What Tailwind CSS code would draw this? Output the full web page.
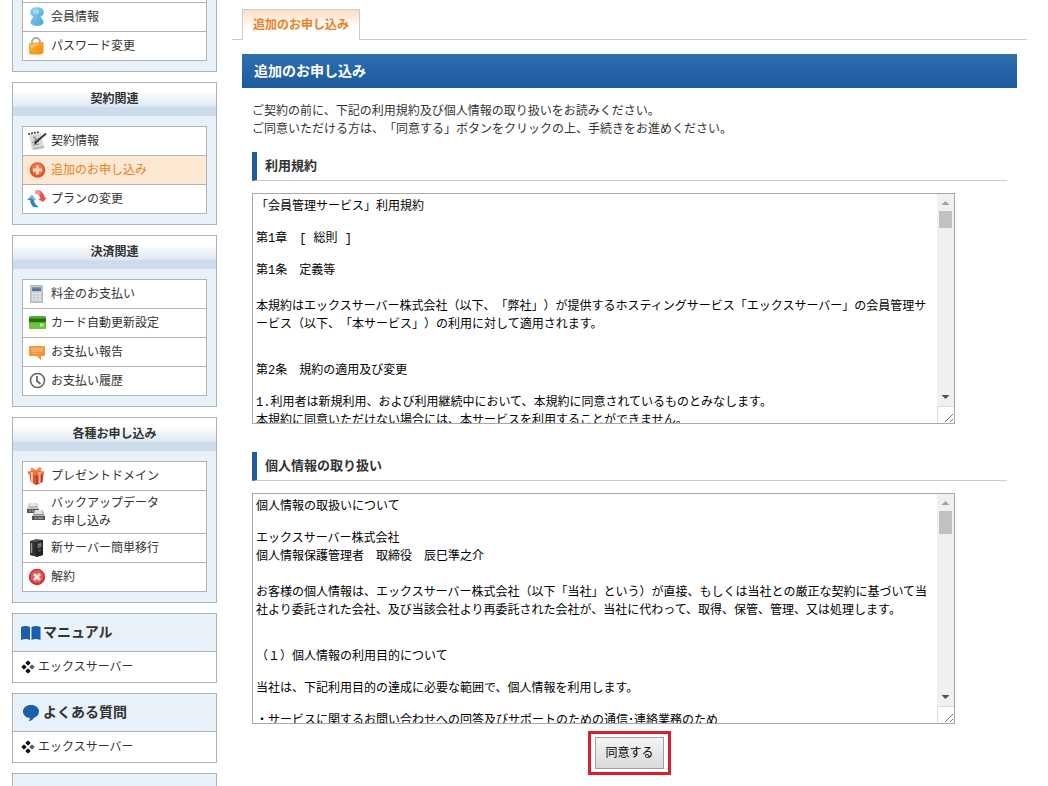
<!DOCTYPE html>
<html lang="ja">
<head>
<meta charset="utf-8">
<meta name="viewport" content="width=device-width, initial-scale=1">
<title>追加のお申し込み</title>
<script src="https://cdn.jsdelivr.net/npm/@tailwindcss/browser@4"></script>
</head>
<body class="h-screen overflow-hidden bg-white font-['Noto_Sans_CJK_JP',sans-serif] text-xs leading-[18px] text-[#333] [text-spacing-trim:space-all]">
<div class="flex items-start gap-[15px] pr-[21px] pl-3">

  <!-- Sidebar -->
  <nav class="flex w-[205px] shrink-0 flex-col gap-2.5" aria-label="メニュー">

    <section class="border border-t-0 border-[#b0b3b6] bg-[#e8f1f8] px-[9px] pb-2.5">
      <ul class="border-x border-b border-[#b0b3b6] bg-white pt-0.5">
        <li class="border-t border-[#b0b3b6]"><a href="#" class="flex min-h-7 items-center gap-1 pl-1">
          <svg class="size-5 shrink-0" viewBox="0 0 20 20" aria-hidden="true"><defs><linearGradient id="person" x2="1" y2="1"><stop stop-color="#8fd0f2"/><stop offset="1" stop-color="#4aa5d6"/></linearGradient></defs><path d="M10 .5a5 5 0 0 0-3.500 9.500q-1.500 1-2 2.500Q3 15 4 17q2 2 6 2t6-2q1-2-.5-4.500-.5-1.500-2-2.500A5 5 0 0 0 10 .5z" fill="url(#person)"/><ellipse cx="9" cy="4.500" rx="3" ry="2.500" fill="#c2e6f9" opacity=".6"/></svg>
          <span class="pb-0.5">会員情報</span></a></li>
        <li class="border-t border-[#b0b3b6]"><a href="#" class="flex min-h-7 items-center gap-1 pl-1">
          <svg class="size-5 shrink-0" viewBox="0 0 20 20" aria-hidden="true"><defs><linearGradient id="lock" x2="1" y2="1"><stop stop-color="#ffb63a"/><stop offset="1" stop-color="#f58a06"/></linearGradient></defs><path d="M5 9V6a4 4 0 0 1 8 0v3" fill="none" stroke="#a9a9a9" stroke-width="2"/><path d="m2 7 14.500-1v11l-3 1.500H3.500L2 17z" fill="url(#lock)"/><path d="M3 8h9L4 13z" fill="#ffd070" opacity=".6"/><path d="M5 9V6.500M13 8.500v-2" fill="none" stroke="#b9b2a4" stroke-width="2"/></svg>
          <span class="pb-0.5">パスワード変更</span></a></li>
      </ul>
    </section>

    <section class="border border-[#b0b3b6] bg-[#e8f1f8]">
      <h2 class="bg-linear-to-b from-white from-25% via-[#dfe9f4] via-70% to-[#cddceb] to-75% pt-1.5 pb-[9px] text-center font-bold">契約関連</h2>
      <ul class="mx-[9px] my-2.5 border-x border-b border-[#b0b3b6] bg-white">
        <li class="border-t border-[#b0b3b6]"><a href="#" class="flex min-h-7 items-center gap-1 pl-1">
          <svg class="size-5 shrink-0" viewBox="0 0 20 20" aria-hidden="true"><path d="M2 3 14 2l3 15-12 2z" fill="#d8d8d6"/><path d="m6 17 11-2 .5 2L7 19z" fill="#b9b9b8"/><path d="m1 3 11-2" stroke="#444" stroke-width="1.500" stroke-dasharray="2 1"/><path d="m6 6 6 5M5 12l7-5m-6 7 6-1M8 5l1 9" stroke="#888"/><path d="m8 12 11-9.500" stroke="#333" stroke-width="1.700"/><path d="m7 13 3-1-1.500-1.500z" fill="#111"/></svg>
          <span class="pb-0.5">契約情報</span></a></li>
        <li class="border-t border-[#b0b3b6]"><a href="#" aria-current="page" class="flex min-h-7 items-center gap-1 bg-[#fde9d3] pl-1 text-[#ec7f22]">
          <svg class="size-5 shrink-0" viewBox="0 0 20 20" aria-hidden="true"><circle cx="10.500" cy="10" r="7.800" fill="#df5526"/><circle cx="10.500" cy="9" r="6" fill="#ec7447"/><path d="M10.500 5.500v9M6 10h9" stroke="#fbd5c2" stroke-width="2.800"/></svg>
          <span class="pb-0.5">追加のお申し込み</span></a></li>
        <li class="border-t border-[#b0b3b6]"><a href="#" class="flex min-h-7 items-center gap-1 pl-1">
          <svg class="size-5 shrink-0" viewBox="0 0 20 20" aria-hidden="true"><path d="M8 2q7-3 10 7l2-.5-4 4.500-5-3 2.500-.5Q12 4.500 8 4.500z" fill="#ea5055"/><path d="M8 2q5-1 6 3l-2 1Q11 4 8 4.500z" fill="#f79694"/><path d="M12 18Q4 20 3 11H0l5-5 4 5H7q0 4 5 7z" fill="#2e85bd"/><path d="M0 11l5-5 4 5H6.500l-2-2z" fill="#7db9dd"/></svg>
          <span class="pb-0.5">プランの変更</span></a></li>
      </ul>
    </section>

    <section class="border border-[#b0b3b6] bg-[#e8f1f8]">
      <h2 class="bg-linear-to-b from-white from-25% via-[#dfe9f4] via-70% to-[#cddceb] to-75% pt-1.5 pb-[9px] text-center font-bold">決済関連</h2>
      <ul class="mx-[9px] my-2.5 border-x border-b border-[#b0b3b6] bg-white">
        <li class="border-t border-[#b0b3b6]"><a href="#" class="flex min-h-7 items-center gap-1 pl-1">
          <svg class="size-5 shrink-0" viewBox="0 0 20 20" aria-hidden="true"><path d="M3.500 1.500h12v17h-12z" fill="#c3c9ce" stroke="#b4b9be"/><path d="M5 3h9v4H5z" fill="#507896"/><path d="M5 3h9v1.500H5z" fill="#7c9bb2"/><path d="M5 9.500h9M5 12.500h9M5 15.500h9" stroke="#e4e8eb" stroke-width="2" stroke-dasharray="2.300 1"/></svg>
          <span class="pb-0.5">料金のお支払い</span></a></li>
        <li class="border-t border-[#b0b3b6]"><a href="#" class="flex min-h-7 items-center gap-1 pl-1">
          <svg class="size-5 shrink-0" viewBox="0 0 20 20" aria-hidden="true"><rect x="2" y="3" width="17" height="13" rx="1.500" fill="#54b02c"/><path d="M2 10h17v4.500q0 1.500-1.500 1.500h-14Q2 16 2 14.500z" fill="#6dc33b"/><path d="M2 5.500h17V9H2z" fill="#276b13"/><path d="M13 10.500h3.500v3H13z" fill="#b9eb92"/></svg>
          <span class="pb-0.5">カード自動更新設定</span></a></li>
        <li class="border-t border-[#b0b3b6]"><a href="#" class="flex min-h-7 items-center gap-1 pl-1">
          <svg class="size-5 shrink-0" viewBox="0 0 20 20" aria-hidden="true"><path d="M3.500 4h13Q18 4 18 5.500v7q0 1.500-1.500 1.500H14v4l-4.500-4h-6Q2 14 2 12.500v-7Q2 4 3.500 4z" fill="#f3943a"/><path d="M4 5h12v4H4z" fill="#f7a555"/><path d="M5 7.500h10M5 9.500h10M5 11.500h6" stroke="#f9be84" stroke-width=".8"/></svg>
          <span class="pb-0.5">お支払い報告</span></a></li>
        <li class="border-t border-[#b0b3b6]"><a href="#" class="flex min-h-7 items-center gap-1 pl-1">
          <svg class="size-5 shrink-0" viewBox="0 0 20 20" fill="none" stroke="#666" aria-hidden="true"><circle cx="10.500" cy="9.500" r="7" stroke-width="1.600"/><path d="M10 5v5l3.500 3" stroke-width="1.800"/></svg>
          <span class="pb-0.5">お支払い履歴</span></a></li>
      </ul>
    </section>

    <section class="border border-[#b0b3b6] bg-[#e8f1f8]">
      <h2 class="bg-linear-to-b from-white from-25% via-[#dfe9f4] via-70% to-[#cddceb] to-75% pt-1.5 pb-[9px] text-center font-bold">各種お申し込み</h2>
      <ul class="mx-[9px] my-2.5 border-x border-b border-[#b0b3b6] bg-white">
        <li class="border-t border-[#b0b3b6]"><a href="#" class="flex min-h-7 items-center gap-1 pl-1">
          <svg class="size-5 shrink-0" viewBox="0 0 20 20" aria-hidden="true"><path d="m2.500 7 7 1 7-1-1 9-6.500 3-5.500-3z" fill="#e2512f"/><path d="m9 8 7.500-1-1 9L9 19z" fill="#c93a22"/><path d="M1 5.500 9 4l8 1.500V8L9 9.500 1 8z" fill="#f1703f"/><path d="M5 6v11M12.500 6v11" stroke="#fbc7a0" stroke-width="2"/><path d="M9 5Q5 1 4 3t5 2q4-5 5-2.500T9 5z" fill="#f79a4a" stroke="#ee7a3c"/></svg>
          <span class="pb-0.5">プレゼントドメイン</span></a></li>
        <li class="border-t border-[#b0b3b6]"><a href="#" class="flex min-h-[42px] items-center gap-1 pl-1">
          <svg class="size-5 shrink-0" viewBox="0 0 20 20" aria-hidden="true"><path d="M2 1h8l2 6v4H0V7z" fill="#c9c9c9"/><path d="M0 7h12v4H0z" fill="#555"/><path d="M3 1h6v5H3z" fill="#e6e6e6"/><path d="M2 5h8" stroke="#999"/><path d="M8 8h8l2 6v4H5v-4z" fill="#bdbdbd"/><path d="M5 14h13v4H5z" fill="#555"/><path d="M8 8h7v5H8z" fill="#e2e2e2"/><path d="M7 12.500h9" stroke="#888"/><path d="M2 9h2m1 0h2M8 16h2m1 0h5" stroke="#bbb"/></svg>
          <span class="pb-0.5">バックアップデータ<br>お申し込み</span></a></li>
        <li class="border-t border-[#b0b3b6]"><a href="#" class="flex min-h-7 items-center gap-1 pl-1">
          <svg class="size-5 shrink-0" viewBox="0 0 20 20" aria-hidden="true"><path d="m3 3 6-2 7 1v15l-6 2-7-2z" fill="#555"/><path d="m3 3 6 1v14l-6-1z" fill="#303030"/><path d="m9 4 7-2v15l-7 2z" fill="#222"/><path d="m10.500 5 4-1v6l-4 1z" fill="#555"/><path d="m10.500 7 4-1m-4 2.500 4-1M11 13l3-.5" stroke="#aaa" stroke-width=".6"/><path d="M4.500 5v10" stroke="#999" stroke-width="1.500"/></svg>
          <span class="pb-0.5">新サーバー簡単移行</span></a></li>
        <li class="border-t border-[#b0b3b6]"><a href="#" class="flex min-h-7 items-center gap-1 pl-1">
          <svg class="size-5 shrink-0" viewBox="0 0 20 20" aria-hidden="true"><circle cx="10" cy="10" r="8.200" fill="#cf3038"/><circle cx="10" cy="9.500" r="6.500" fill="#df575b"/><path d="m7 7 6 6m0-6-6 6" stroke="#fbe3e2" stroke-width="2.800"/></svg>
          <span class="pb-0.5">解約</span></a></li>
      </ul>
    </section>

    <section class="border border-[#b0b3b6]">
      <h2 class="flex h-[37px] items-center gap-0.5 bg-[#e8f1f8] pl-2 text-sm font-bold">
        <svg class="h-4 w-5 shrink-0" viewBox="0 0 20 16" fill="#1b5faa" aria-hidden="true"><path d="M0 2q5-2 9 0v13q-4-2-9 0zM10.500 2q4-2 9 0v13q-5-2-9 0z"/></svg>
        <span class="pb-[3px]">マニュアル</span></h2>
      <a href="#" class="flex h-[31px] items-center gap-[3px] border-t border-[#b0b3b6] pl-2">
        <svg class="size-3.5 shrink-0" viewBox="0 0 14 14" aria-hidden="true"><g fill="#111"><rect x="5" y="1" width="4" height="4" rx="1" transform="rotate(45 7 3)"/><rect x="1" y="5" width="4" height="4" rx="1" transform="rotate(45 3 7)"/><rect x="5" y="9" width="4" height="4" rx="1" transform="rotate(45 7 11)"/></g><rect x="9" y="5" width="4" height="4" rx="1" transform="rotate(45 11 7)" fill="#3b628e"/></svg>
        <span class="pb-0.5">エックスサーバー</span></a>
    </section>

    <section class="border border-[#b0b3b6]">
      <h2 class="flex h-[37px] items-center gap-0.5 bg-[#e8f1f8] pl-2 text-sm font-bold">
        <svg class="h-4 w-5 shrink-0" viewBox="0 0 20 16" fill="#1b5faa" aria-hidden="true"><path d="M10 0c4.500 0 8 2.500 8 6.500 0 3-2 5.500-5 6.200-1 2-3 3.300-5.500 3.300 1-1 1.500-2 1.500-3-4-.2-7-3-7-6.500C2 2.500 5.500 0 10 0z"/></svg>
        <span class="pb-[3px]">よくある質問</span></h2>
      <a href="#" class="flex h-[31px] items-center gap-[3px] border-t border-[#b0b3b6] pl-2">
        <svg class="size-3.5 shrink-0" viewBox="0 0 14 14" aria-hidden="true"><g fill="#111"><rect x="5" y="1" width="4" height="4" rx="1" transform="rotate(45 7 3)"/><rect x="1" y="5" width="4" height="4" rx="1" transform="rotate(45 3 7)"/><rect x="5" y="9" width="4" height="4" rx="1" transform="rotate(45 7 11)"/></g><rect x="9" y="5" width="4" height="4" rx="1" transform="rotate(45 11 7)" fill="#3b628e"/></svg>
        <span class="pb-0.5">エックスサーバー</span></a>
    </section>

    <section class="h-[70px] border border-[#b0b3b6] bg-[#e8f1f8]"></section>
  </nav>

  <!-- Main column -->
  <main class="min-w-0 flex-1 pt-[9px]">
    <div class="flex">
      <div class="w-2.5 border-b border-[#ccc]"></div>
      <a href="#" class="h-[31px] border-x border-t border-[#ccc] bg-linear-to-b from-[#fddcc4] to-white to-60% px-2.5 pt-[5px] font-bold text-[#ec7f22]">追加のお申し込み</a>
      <div class="flex-1 border-b border-[#ccc]"></div>
    </div>

    <div class="px-2.5 pt-3.5">
      <h1 class="bg-linear-to-b from-[#2f6fae] to-[#1a5a9e] px-3 pt-[7px] pb-[9px] text-sm leading-[18px] font-bold text-white">追加のお申し込み</h1>

      <div class="px-2.5 pt-[13px]">
        <p>ご契約の前に、下記の利用規約及び個人情報の取り扱いをお読みください。<br>ご同意いただける方は、「同意する」ボタンをクリックの上、手続きをお進めください。</p>

        <h2 class="mt-[15px] border-b border-l-[5px] border-b-[#ccc] border-l-[#1f5c9f] pt-1 pb-1.5 pl-2 text-[13px] leading-[18px] font-bold"><label for="terms">利用規約</label></h2>
        <div class="mt-3 flex h-[231px] w-[703px] max-w-full border border-[#a9a9a9]">
          <textarea id="terms" readonly class="min-w-0 flex-1 resize-none overflow-hidden px-[3px] pt-0.5 font-['Liberation_Mono','Noto_Sans_CJK_JP',monospace] leading-[normal] text-black">「会員管理サービス」利用規約

第1章　[ 総則 ]

第1条　定義等
　
本規約はエックスサーバー株式会社（以下、「弊社」）が提供するホスティングサービス「エックスサーバー」の会員管理サ
ービス（以下、「本サービス」）の利用に対して適用されます。


第2条　規約の適用及び変更

1.利用者は新規利用、および利用継続中において、本規約に同意されているものとみなします。
本規約に同意いただけない場合には、本サービスを利用することができません。</textarea>
          <div class="flex w-[17px] flex-col items-center bg-[#f0f0f0]" aria-hidden="true">
            <svg class="size-[17px]" viewBox="0 0 17 17"><path d="m4.500 11 4-4 4 4z" fill="#a0a0a0"/></svg>
            <div class="h-[17px] w-[13px] bg-[#c1c1c1]"></div>
            <svg class="mt-auto size-[17px]" viewBox="0 0 17 17"><path d="m4.500 6 4 4 4-4z" fill="#505050"/></svg>
            <svg class="size-[17px] border-t border-l border-[#dcdcdc] bg-white" viewBox="0 0 16 16" stroke="#777"><path d="m7 15 8-8m-3 8 3-3"/></svg>
          </div>
        </div>

        <h2 class="mt-7 border-b border-l-[5px] border-b-[#ccc] border-l-[#1f5c9f] pt-1 pb-1.5 pl-2 text-[13px] leading-[18px] font-bold"><label for="privacy">個人情報の取り扱い</label></h2>
        <div class="mt-3 flex h-[231px] w-[703px] max-w-full border border-[#a9a9a9]">
          <textarea id="privacy" readonly class="min-w-0 flex-1 resize-none overflow-hidden px-[3px] pt-0.5 font-['Liberation_Mono','Noto_Sans_CJK_JP',monospace] leading-[normal] text-black">個人情報の取扱いについて

エックスサーバー株式会社
個人情報保護管理者　取締役　辰巳準之介
　
お客様の個人情報は、エックスサーバー株式会社（以下「当社」という）が直接、もしくは当社との厳正な契約に基づいて当
社より委託された会社、及び当該会社より再委託された会社が、当社に代わって、取得、保管、管理、又は処理します。


（１）個人情報の利用目的について

当社は、下記利用目的の達成に必要な範囲で、個人情報を利用します。

・サービスに関するお問い合わせへの回答及びサポートのための通信･連絡業務のため</textarea>
          <div class="flex w-[17px] flex-col items-center bg-[#f0f0f0]" aria-hidden="true">
            <svg class="size-[17px]" viewBox="0 0 17 17"><path d="m4.500 11 4-4 4 4z" fill="#a0a0a0"/></svg>
            <div class="h-[23px] w-[13px] bg-[#c1c1c1]"></div>
            <svg class="mt-auto size-[17px]" viewBox="0 0 17 17"><path d="m4.500 6 4 4 4-4z" fill="#505050"/></svg>
            <svg class="size-[17px] border-t border-l border-[#dcdcdc] bg-white" viewBox="0 0 16 16" stroke="#777"><path d="m7 15 8-8m-3 8 3-3"/></svg>
          </div>
        </div>

        <div class="mt-[7px] flex justify-center">
          <div class="border-[3px] border-[#dc1f2b] px-1 py-[3px]">
            <button type="button" class="block border border-[#a0a0a0] bg-linear-to-b from-[#f4f4f4] to-[#dadada] px-[9px] pt-[5px] pb-[7px] text-black">同意する</button>
          </div>
        </div>
      </div>
    </div>
  </main>
</div>
</body>
</html>
